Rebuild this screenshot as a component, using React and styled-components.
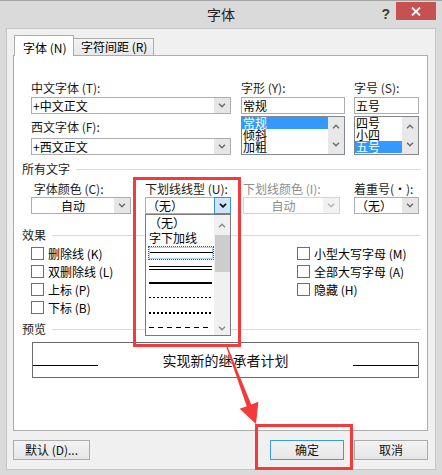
import React from 'react';
import styled, { createGlobalStyle, css } from 'styled-components';

const GlobalStyle = createGlobalStyle`
  html, body { margin: 0; padding: 0; background: #dadada; }
  body {
    font-family: "Noto Sans CJK SC", "Noto Sans", sans-serif;
    font-size: 12px;
    color: #000;
  }
  * { box-sizing: border-box; }
`;

const Window = styled.div`
  position: relative;
  width: 442px;
  height: 475px;
  background: #dadada;
  border-top: 1px solid #a3a3a3;
  display: flex;
  flex-direction: column;
  overflow: hidden;
`;

const TitleBar = styled.div`
  height: 27px;
  display: grid;
  grid-template-columns: 1fr auto 1fr;
  align-items: start;
`;

const Title = styled.div`
  grid-column: 2;
  margin-top: 4px;
  font-size: 14px;
  line-height: 18px;
  color: #222;
`;

const Controls = styled.div`
  grid-column: 3;
  justify-self: end;
  display: flex;
  align-items: flex-start;
  gap: 6px;
  padding-right: 6px;
`;

const HelpGlyph = styled.span`
  margin-top: 5px;
  font-family: "Liberation Sans", Arial, sans-serif;
  font-weight: bold;
  font-size: 14px;
  line-height: 16px;
  color: #3a3a3a;
`;

const CloseButton = styled.div`
  width: 40px;
  height: 18px;
  margin-top: 1px;
  background: #c75050;
  display: flex;
  align-items: center;
  justify-content: center;
`;

const DialogPanel = styled.div`
  margin: 0 6px;
  height: 442px;
  background: #f0f0f0;
  border: 1px solid #c6c6c6;
  padding: 6px 7px 0 6px;
  display: flex;
  flex-direction: column;
`;

const TabRow = styled.div`
  height: 20px;
  display: flex;
  align-items: flex-end;
  padding-left: 1px;
`;

const Tab = styled.div`
  position: relative;
  border: 1px solid #adadad;
  border-bottom: none;
  line-height: 16px;
  white-space: nowrap;
  ${p => p.$active ? css`
    z-index: 1;
    width: 60px;
    height: 21px;
    margin-bottom: -1px;
    padding: 4px 0 0 8px;
    background: #fff;
  ` : css`
    width: 81px;
    height: 17px;
    margin-left: -1px;
    padding: 0 0 0 7px;
    background: linear-gradient(#f3f3f3, #e8e8e8);
  `}
`;

const TabPage = styled.div`
  position: relative;
  height: 376px;
  background: #fff;
  border: 1px solid #adadad;
  padding: 24px 6px 0 17px;
  display: flex;
  flex-direction: column;
`;

const Row = styled.div`
  display: flex;
  align-items: flex-start;
  margin-top: ${p => p.$mt || 0}px;
`;

const Field = styled.div`
  position: relative;
  display: flex;
  flex-direction: column;
  width: ${p => p.$w}px;
  margin-left: ${p => p.$ml || 0}px;
`;

const Label = styled.div`
  height: 16px;
  line-height: 16px;
  white-space: nowrap;
  color: ${p => p.$disabled ? '#8d8d8d' : '#1a1a1a'};
  margin-top: ${p => p.$mt || 0}px;
`;

const Combo = styled.div`
  display: flex;
  height: 17px;
  margin-top: ${p => p.$mt || 0}px;
  border: 1px solid ${p => p.$disabled ? '#d5d5d5' : '#abadb3'};
  background: #fff;
`;

const ComboText = styled.div`
  flex: 1;
  min-width: 0;
  padding-left: ${p => p.$center ? 0 : 1}px;
  text-align: ${p => p.$center ? 'center' : 'left'};
  line-height: 15px;
  white-space: nowrap;
  overflow: hidden;
  color: ${p => p.$disabled ? '#8d8d8d' : '#000'};
`;

const ComboButton = styled.div`
  width: 16px;
  display: flex;
  align-items: center;
  justify-content: center;
  background: ${p => p.$active ? '#cde6f7' : p.$disabled ? '#f2f2f2' : '#e6e6e6'};
  box-shadow: ${p => p.$active ? 'inset 0 0 0 1px #3c8fdc' : 'none'};
  margin: ${p => p.$active ? '-1px -1px -1px 0' : '0'};
  width: ${p => p.$active ? 17 : 16}px;
`;

const TextInput = styled.div`
  height: 17px;
  margin-top: 1px;
  border: 1px solid #abadb3;
  background: #fff;
  padding-left: 1px;
  line-height: 15px;
`;

const ListBox = styled.div`
  display: flex;
  height: 39px;
  margin-top: 2px;
  border: 1px solid #828790;
  background: #fff;
  overflow: hidden;
`;

const ListItems = styled.div`
  flex: 1;
  min-width: 0;
`;

const ListItem = styled.div`
  height: 12px;
  line-height: 12px;
  padding-left: 1px;
  white-space: nowrap;
  background: ${p => p.$selected ? '#3399ff' : 'transparent'};
  color: ${p => p.$selected ? '#fff' : '#000'};
`;

const ScrollBar = styled.div`
  width: 16px;
  display: flex;
  flex-direction: column;
  align-items: center;
  justify-content: space-between;
  padding: 7px 0;
  background: #e8e8e8;
`;

const SectionHeader = styled.div`
  display: flex;
  align-items: center;
  height: 16px;
  margin: ${p => p.$mt || 0}px 0 0 -9px;
  line-height: 16px;
  color: #1a1a1a;
  &::after {
    content: "";
    flex: 1;
    height: 1px;
    margin-left: 6px;
    background: #dcdcdc;
  }
`;

const CheckColumn = styled.div`
  display: flex;
  flex-direction: column;
  width: ${p => p.$w ? `${p.$w}px` : 'auto'};
`;

const CheckRow = styled.div`
  display: flex;
  align-items: center;
  gap: 4px;
  height: 18px;
  white-space: nowrap;
`;

const CheckBox = styled.span`
  width: 13px;
  height: 13px;
  border: 1px solid #6f6f6f;
  background: #fff;
`;

const Preview = styled.div`
  display: grid;
  grid-template-columns: 65px 1fr 65px;
  align-items: center;
  width: 387px;
  height: 36px;
  margin: 5px 0 0 1px;
  border: 1px solid #6b6b6b;
  padding: 0 0 0 0;
`;

const PreviewText = styled.div`
  text-align: center;
  font-size: 14px;
  line-height: 18px;
  color: #111;
`;

const PreviewLine = styled.div`
  height: 1px;
  margin-top: 10px;
  background: #000;
`;

const DropList = styled.div`
  position: absolute;
  top: 100%;
  left: 0;
  z-index: 2;
  width: 86px;
  height: 122px;
  display: flex;
  border: 1px solid #7a7a7a;
  background: #fff;
`;

const DropItems = styled.div`
  flex: 1;
  min-width: 0;
  padding-left: 1px;
`;

const DropItem = styled.div`
  display: flex;
  align-items: center;
  height: 15px;
  padding-left: 2px;
  line-height: 15px;
  white-space: nowrap;
`;

const FocusBox = styled.div`
  display: flex;
  align-items: center;
  width: 66px;
  height: 14px;
  margin-left: -1px;
  border: 1px dotted #1060c8;
  box-shadow: inset 0 0 0 1px #a9d2ff;
  padding-left: 1px;
`;

const patterns = {
  single: css`height: 1px; background: #000;`,
  double: css`height: 4px; border-top: 1px solid #000; border-bottom: 1px solid #000;`,
  thick: css`height: 2px; background: #000;`,
  dotted: css`height: 1px; background: repeating-linear-gradient(90deg, #000 0 2px, transparent 2px 4px);`,
  heavyDot: css`height: 2px; background: repeating-linear-gradient(90deg, #000 0 2px, transparent 2px 4px);`,
  dashed: css`height: 1px; background: repeating-linear-gradient(90deg, #000 0 5px, transparent 5px 9px);`,
};

const LineSample = styled.div`
  width: 63px;
  ${p => patterns[p.$kind]}
`;

const DropScroll = styled.div`
  width: 16px;
  display: flex;
  flex-direction: column;
  align-items: center;
  background: #f0f0f0;
`;

const ArrowCell = styled.div`
  height: ${p => p.$h}px;
  width: 100%;
  display: flex;
  align-items: center;
  justify-content: center;
`;

const Thumb = styled.div`
  width: 15px;
  height: 37px;
  background: #cdcdcd;
`;

const Spacer = styled.div`
  flex: 1;
`;

const Footer = styled.div`
  display: flex;
  justify-content: space-between;
  margin-top: 9px;
`;

const ButtonGroup = styled.div`
  display: flex;
  gap: 10px;
`;

const Button = styled.div`
  width: ${p => p.$w}px;
  height: 20px;
  display: flex;
  align-items: center;
  justify-content: center;
  border: 1px solid ${p => p.$primary ? '#3c9be8' : '#acacac'};
  background: linear-gradient(#f3f3f3, #e6e6e6);
  line-height: 16px;
  white-space: nowrap;
  color: #111;
`;

const Annotation = styled.div`
  position: absolute;
  z-index: 5;
  left: ${p => p.$x}px;
  top: ${p => p.$y - 1}px;
  width: ${p => p.$w}px;
  height: ${p => p.$h}px;
  border: 3px solid #f33b3b;
  pointer-events: none;
`;

const ArrowLayer = styled.svg`
  position: absolute;
  z-index: 6;
  left: 0;
  top: -1px;
  pointer-events: none;
`;

const Chevron = ({ up, color = '#6a6a6a', bold }) => (
  <svg width="8" height="5" viewBox="0 0 8 5">
    <path
      d={up ? 'M1 4.2 L4 1.2 L7 4.2' : 'M1 0.8 L4 3.8 L7 0.8'}
      fill="none"
      stroke={color}
      strokeWidth={bold ? 1.8 : 1.4}
    />
  </svg>
);

export default function App() {
  return (
    <>
      <GlobalStyle />
      <Window>
        <TitleBar>
          <Title>字体</Title>
          <Controls>
            <HelpGlyph>?</HelpGlyph>
            <CloseButton>
              <svg width="10" height="9" viewBox="0 0 10 9">
                <path d="M1 0.5 L9 8.5 M9 0.5 L1 8.5" stroke="#fff" strokeWidth="1.8" />
              </svg>
            </CloseButton>
          </Controls>
        </TitleBar>

        <DialogPanel>
          <TabRow>
            <Tab $active>字体 (N)</Tab>
            <Tab>字符间距 (R)</Tab>
          </TabRow>

          <TabPage>
            <Row>
              <Field $w={200}>
                <Label>中文字体 (T):</Label>
                <Combo $mt={1}>
                  <ComboText>+中文正文</ComboText>
                  <ComboButton><Chevron /></ComboButton>
                </Combo>
                <Label $mt={5}>西文字体 (F):</Label>
                <Combo $mt={3}>
                  <ComboText>+西文正文</ComboText>
                  <ComboButton><Chevron /></ComboButton>
                </Combo>
              </Field>
              <Field $w={104} $ml={10}>
                <Label>字形 (Y):</Label>
                <TextInput>常规</TextInput>
                <ListBox>
                  <ListItems>
                    <ListItem $selected>常规</ListItem>
                    <ListItem>倾斜</ListItem>
                    <ListItem>加粗</ListItem>
                  </ListItems>
                  <ScrollBar>
                    <Chevron up />
                    <Chevron />
                  </ScrollBar>
                </ListBox>
              </Field>
              <Field $w={65} $ml={9}>
                <Label>字号 (S):</Label>
                <TextInput>五号</TextInput>
                <ListBox>
                  <ListItems>
                    <ListItem>四号</ListItem>
                    <ListItem>小四</ListItem>
                    <ListItem $selected>五号</ListItem>
                  </ListItems>
                  <ScrollBar>
                    <Chevron up />
                    <Chevron />
                  </ScrollBar>
                </ListBox>
              </Field>
            </Row>

            <SectionHeader $mt={6}>所有文字</SectionHeader>

            <Row $mt={4}>
              <Field $w={100}>
                <Label>&nbsp;字体颜色 (C):</Label>
                <Combo>
                  <ComboText $center>自动</ComboText>
                  <ComboButton><Chevron /></ComboButton>
                </Combo>
              </Field>
              <Field $w={86} $ml={14}>
                <Label>下划线线型 (U):</Label>
                <Combo>
                  <ComboText>（无）</ComboText>
                  <ComboButton $active><Chevron color="#111" bold /></ComboButton>
                </Combo>
                <DropList>
                  <DropItems>
                    <DropItem>（无）</DropItem>
                    <DropItem>字下加线</DropItem>
                    <DropItem>
                      <FocusBox><LineSample $kind="single" /></FocusBox>
                    </DropItem>
                    <DropItem><LineSample $kind="double" /></DropItem>
                    <DropItem><LineSample $kind="thick" /></DropItem>
                    <DropItem><LineSample $kind="dotted" /></DropItem>
                    <DropItem><LineSample $kind="heavyDot" /></DropItem>
                    <DropItem><LineSample $kind="dashed" /></DropItem>
                  </DropItems>
                  <DropScroll>
                    <ArrowCell $h={20}><Chevron up color="#8a8a8a" /></ArrowCell>
                    <Thumb />
                    <Spacer />
                    <ArrowCell $h={14}><Chevron color="#8a8a8a" /></ArrowCell>
                  </DropScroll>
                </DropList>
              </Field>
              <Field $w={97} $ml={12}>
                <Label $disabled>下划线颜色 (I):</Label>
                <Combo $disabled>
                  <ComboText $center $disabled>自动</ComboText>
                  <ComboButton $disabled><Chevron color="#b5b5b5" /></ComboButton>
                </Combo>
              </Field>
              <Field $w={65} $ml={14}>
                <Label>着重号(·):</Label>
                <Combo>
                  <ComboText>（无）</ComboText>
                  <ComboButton><Chevron /></ComboButton>
                </Combo>
              </Field>
            </Row>

            <SectionHeader $mt={13}>效果</SectionHeader>

            <Row $mt={1}>
              <CheckColumn $w={266}>
                <CheckRow><CheckBox />删除线 (K)</CheckRow>
                <CheckRow><CheckBox />双删除线 (L)</CheckRow>
                <CheckRow><CheckBox />上标 (P)</CheckRow>
                <CheckRow><CheckBox />下标 (B)</CheckRow>
              </CheckColumn>
              <CheckColumn>
                <CheckRow><CheckBox />小型大写字母 (M)</CheckRow>
                <CheckRow><CheckBox />全部大写字母 (A)</CheckRow>
                <CheckRow><CheckBox />隐藏 (H)</CheckRow>
              </CheckColumn>
            </Row>

            <SectionHeader $mt={5}>预览</SectionHeader>

            <Preview>
              <PreviewLine />
              <PreviewText>实现新的继承者计划</PreviewText>
              <PreviewLine />
            </Preview>
          </TabPage>

          <Footer>
            <Button $w={77}>默认 (D)...</Button>
            <ButtonGroup>
              <Button $w={74} $primary>确定</Button>
              <Button $w={74}>取消</Button>
            </ButtonGroup>
          </Footer>
        </DialogPanel>

        <Annotation $x={133} $y={177} $w={108} $h={170} />
        <Annotation $x={255} $y={424} $w={98} $h={46} />
        <ArrowLayer width="442" height="475" viewBox="0 0 442 475">
          <polygon
            fill="#f33b3b"
            points="226.4,347.2 246.7,406.2 239.6,408.8 256,424 258.4,401.8 251.3,404.4 227.6,346.8"
          />
        </ArrowLayer>
      </Window>
    </>
  );
}
